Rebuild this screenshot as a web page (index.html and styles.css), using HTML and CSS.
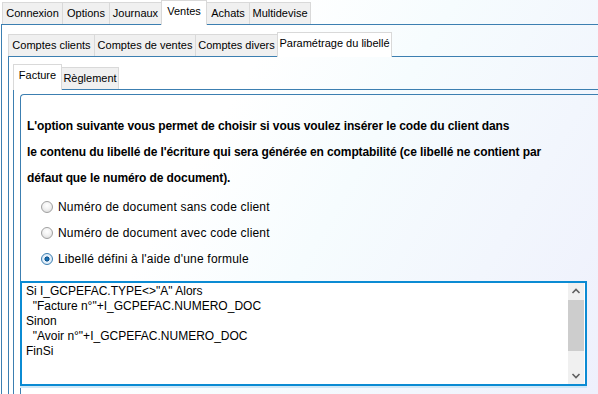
FILE: index.html
```html
<!doctype html>
<html lang="fr">
    <head>
        <meta charset="UTF-8" />
        <title>Paramétrage du libellé</title>
        <link rel="stylesheet" href="styles.css">
    </head>
    <body>
        <div class="tabctl top">
            <div class="strip">
                <div class="tab" style="width: 61px">Connexion</div>
                <div class="tab" style="width: 48px">Options</div>
                <div class="tab" style="width: 53px">Journaux</div>
                <div class="tab selected" style="width: 46px">Ventes</div>
                <div class="tab" style="width: 44px">Achats</div>
                <div class="tab" style="width: 62px">Multidevise</div>
            </div>
            <div class="page">
                <div class="tabctl second">
                    <div class="strip">
                        <div class="tab" style="width: 87px">Comptes clients</div>
                        <div class="tab" style="width: 102px">Comptes de ventes</div>
                        <div class="tab" style="width: 83px">Comptes divers</div>
                        <div class="tab selected" style="width: 115px">Paramétrage du libellé</div>
                    </div>
                    <div class="page">
                        <div class="tabctl third">
                            <div class="strip">
                                <div class="tab selected" style="width: 49px">Facture</div>
                                <div class="tab" style="width: 58px">Règlement</div>
                            </div>
                            <div class="page">
                                <div class="groupbox">
                                    <p class="intro">
                                        L'option suivante vous permet de choisir si vous voulez insérer le code du client dans<br>
                                        le contenu du libellé de l'écriture qui sera générée en comptabilité (ce libellé ne contient par<br>
                                        défaut que le numéro de document).
                                    </p>
                                    <div class="radio-row"><span class="radio"></span>Numéro de document sans code client</div>
                                    <div class="radio-row"><span class="radio"></span>Numéro de document avec code client</div>
                                    <div class="radio-row"><span class="radio checked"></span>Libellé défini à l'aide d'une formule</div>
                                    <div class="editor">
                                        <pre class="formula">Si I_GCPEFAC.TYPE&lt;&gt;"A" Alors
  "Facture n°"+I_GCPEFAC.NUMERO_DOC
Sinon
  "Avoir n°"+I_GCPEFAC.NUMERO_DOC
FinSi</pre>
                                        <div class="scrollbar">
                                            <svg class="arrow" width="16" height="16" viewBox="0 0 16 16">
                                                <path d="M4.5 10 L8 6.5 L11.5 10" fill="none" stroke="#606060" stroke-width="1.6" />
                                            </svg>
                                            <div class="track">
                                                <div class="thumb"></div>
                                            </div>
                                            <svg class="arrow" width="16" height="16" viewBox="0 0 16 16">
                                                <path d="M4.5 6 L8 9.5 L11.5 6" fill="none" stroke="#606060" stroke-width="1.6" />
                                            </svg>
                                        </div>
                                    </div>
                                </div>
                            </div>
                        </div>
                    </div>
                </div>
            </div>
        </div>
    </body>
</html>
```

FILE: styles.css
```css
body {
    margin: 0;
    width: 598px;
    height: 394px;
    overflow: hidden;
    font-family: "Liberation Sans", Arial, sans-serif;
    font-size: 12px;
    color: #000;
    background: linear-gradient(120deg, #ffffff 0%, #ffffff 35%, #f6fcfe 55%, #eef0fc 100%);
}

.tabctl {
    display: flex;
    flex-direction: column;
}

.strip {
    display: flex;
    align-items: flex-end;
}

.tab {
    box-sizing: border-box;
    height: 22px;
    line-height: 20px;
    font-size: 11px;
    text-align: center;
    white-space: nowrap;
    background: #f0f0f0;
    border: 1px solid #d9d9d9;
    border-bottom: none;
    margin-left: -1px;
}

.tab:first-child {
    margin-left: 0;
}

.tab.selected {
    height: 25px;
    line-height: 20px;
    margin-bottom: -1px;
    background: #fff;
    position: relative;
    z-index: 1;
}

.page {
    border-top: 1px solid #3c7fb1;
    border-left: 1px solid #3c7fb1;
}

.top {
    margin-left: 1px;
}

.top > .strip {
    height: 24px;
    padding-left: 1px;
}

.second {
    margin-left: 6px;
}

.second > .strip {
    height: 31px;
}

.third {
    margin-left: 4px;
}

.third > .strip {
    height: 32px;
}

.third .tab.selected {
    height: 26px;
}

.groupbox {
    margin: 4px 0 0 6px;
    height: 299px;
    border: 1px solid #3c7fb1;
    border-right: none;
    border-bottom: none;
    border-top-left-radius: 4px;
}

.intro {
    margin: 18px 0 0 6px;
    font-size: 12px;
    font-weight: bold;
    line-height: 26px;
    letter-spacing: -0.1px;
}

.radio-row {
    display: flex;
    align-items: center;
    height: 26px;
    padding-left: 20px;
    letter-spacing: 0.2px;
}

.radio-row:first-of-type {
    margin-top: 3px;
}

.radio {
    box-sizing: border-box;
    width: 12px;
    height: 12px;
    margin-right: 5px;
    border-radius: 50%;
    border: 1px solid #a0a0a0;
    background: radial-gradient(circle at 50% 35%, #ffffff 0%, #f2f2f2 45%, #d6d6d6 100%);
}

.radio.checked {
    border-color: #3c7fb1;
    background: radial-gradient(circle, #1b7fc6 0%, #0b4f8a 32%, #e8f2fb 40%, #cfe2f3 100%);
}

.editor {
    display: flex;
    box-sizing: border-box;
    width: 567px;
    height: 105px;
    margin: 9px 0 0 -1px;
    border: 2px solid #0b8bd3;
    background: #fff;
    box-shadow: 0 2px 0 #cfe8f7;
}

.formula {
    flex: 1;
    margin: 0;
    padding: 1px 4px;
    font-family: "Liberation Sans", Arial, sans-serif;
    font-size: 12px;
    line-height: 15px;
}

.scrollbar {
    display: flex;
    flex-direction: column;
    width: 16px;
    margin: 0 1px 0 0;
    background: #f0f0f0;
}

.arrow {
    display: block;
    flex: none;
}

.track {
    flex: 1;
}

.thumb {
    height: 51px;
    margin-top: 1px;
    background: #cdcdcd;
}
```
